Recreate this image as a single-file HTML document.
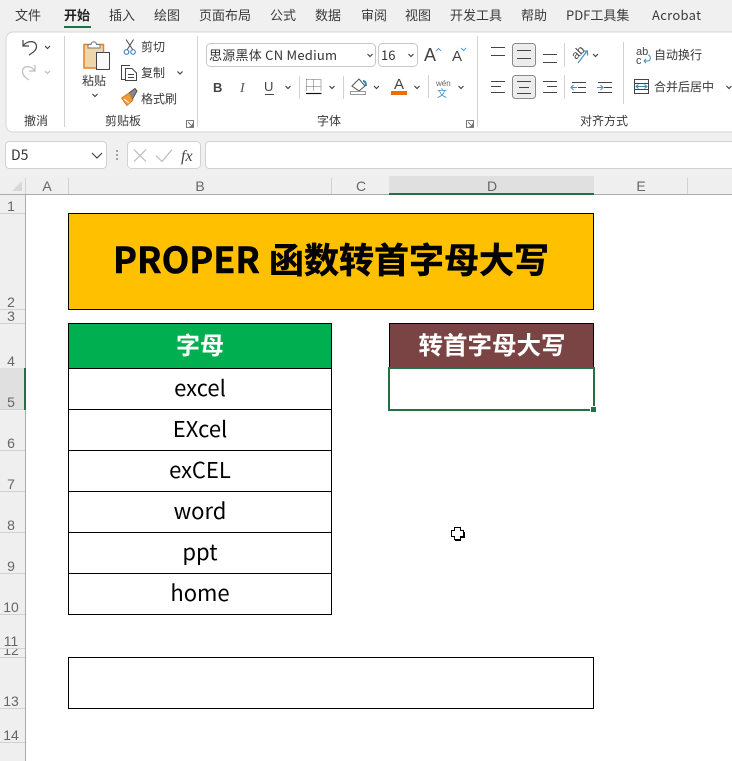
<!DOCTYPE html>
<html lang="zh"><head><meta charset="utf-8"><title>PROPER</title>
<style>
html,body{margin:0;padding:0;background:#fff;width:732px;height:761px;overflow:hidden}
svg{display:block}
text{font-family:"Noto Sans CJK SC","Liberation Sans",sans-serif;fill:#333}
.t{font-size:13px;fill:#3a3a3a}
.r{font-size:12px;fill:#3a3a3a}
.h{font-family:"Liberation Sans","Noto Sans CJK SC",sans-serif;font-size:14px;fill:#666;text-anchor:middle}
.d{font-size:22px;fill:#000;text-anchor:middle}
.c{fill:none;stroke:#444;stroke-width:1.2}
.l{stroke:#444;stroke-width:1;fill:none;shape-rendering:crispEdges}
.s{stroke:#d2d2d2;stroke-width:1;shape-rendering:crispEdges}
.b{stroke:#000;stroke-width:1;shape-rendering:crispEdges}
</style></head><body>
<svg width="732" height="761" viewBox="0 0 732 761" xmlns="http://www.w3.org/2000/svg">
<rect width="732" height="178" fill="#f0f0f0"/>
<!-- tabs -->
<text class="t" x="15" y="20">文件</text>
<text class="t" x="64" y="20" style="font-weight:700;fill:#222">开始</text>
<text class="t" x="109" y="20">插入</text>
<text class="t" x="154" y="20">绘图</text>
<text class="t" x="199" y="20">页面布局</text>
<text class="t" x="270" y="20">公式</text>
<text class="t" x="315" y="20">数据</text>
<text class="t" x="361" y="20">审阅</text>
<text class="t" x="405" y="20">视图</text>
<text class="t" x="450" y="20">开发工具</text>
<text class="t" x="521" y="20">帮助</text>
<text class="t" x="566" y="20">PDF工具集</text>
<text class="t" x="652" y="20" style="letter-spacing:.3px">Acrobat</text>
<rect x="64" y="26" width="27" height="2" fill="#1f6f4a"/>
<!-- ribbon -->
<rect x="6" y="32" width="740" height="100" rx="7" fill="#fff" stroke="#d6d6d6"/>
<path class="s" d="M64.500 36V127M197.500 36V127M477.500 36V127M299.500 76V99M343.500 76V99M428.500 75V98M564.500 43V67M564.500 75V99M623.500 42V104"/>
<!-- undo / redo -->
<path d="M23 40V46H29M23 46C27 40 37 40 36.500 47C36 51 32 53 29 55" fill="none" stroke="#444" stroke-width="1.200"/>
<path class="c" d="M45 46l2.500 2.500L50 46"/>
<path d="M35 65V71H29M35 71C31 65 22 65 22.500 72C23 76 26 78 29 80" fill="none" stroke="#bdbdbd" stroke-width="1.200"/>
<path d="M45 71l2.500 2.500L50 71" fill="none" stroke="#bdbdbd" stroke-width="1.200"/>
<text class="r" x="24" y="125">撤消</text>
<!-- paste -->
<rect x="84" y="44.500" width="19.500" height="23.500" fill="#eed5aa" stroke="#e97f22" stroke-width="1.500"/>
<path d="M88 48V44.500H91C91.500 41 96 41 96.500 44.500H100V48Z" fill="#fff" stroke="#777"/>
<rect x="96.500" y="52.500" width="13" height="17" fill="#fafafa" stroke="#444"/>
<text class="r" x="82" y="85">粘贴</text>
<path class="c" d="M92.500 94l2.500 2.500L97.500 94"/>
<!-- cut -->
<path d="M126 39.500L133 50M133.500 39.500L127 50" fill="none" stroke="#555" stroke-width="1.100"/>
<circle cx="126.500" cy="52" r="2.300" fill="none" stroke="#4a86c5" stroke-width="1.200"/>
<circle cx="133" cy="52" r="2.300" fill="none" stroke="#4a86c5" stroke-width="1.200"/>
<text class="r" x="141" y="51">剪切</text>
<!-- copy -->
<path d="M125 79.500H121.500V65.500H130" fill="none" stroke="#444"/>
<path d="M125.500 68.500H132L136.500 73V80.500H125.500Z" fill="#fff" stroke="#444"/>
<path class="l" d="M128 74.500H134M128 77.500H134"/>
<text class="r" x="141" y="77">复制</text>
<path class="c" d="M177.500 71.500l2.500 2.500L182.500 71.500"/>
<!-- painter -->
<path d="M121.500 98L129 93L133 100L127 105.500Z" fill="#f39a32" stroke="#e07a16"/>
<path d="M124 99L129 103" stroke="#fff" fill="none"/>
<path d="M129 93L135 88.500L137 91L132.500 99" fill="#888" stroke="#555"/>
<text class="r" x="141" y="103">格式刷</text>
<text class="r" x="105" y="125">剪贴板</text>
<path d="M186.500 120.500H193.500V127.500H186.500ZM188 122L192.500 126.500M192.500 123.500V126.500H189.500" fill="none" stroke="#555" stroke-width=".8"/>
<!-- font -->
<rect x="206.500" y="43.500" width="169" height="23" rx="4" fill="#fff" stroke="#c8c8c8"/>
<text x="209" y="60" style="font-size:13px;fill:#333;letter-spacing:.25px">思源黑体 CN Medium</text>
<path class="c" d="M367.500 54l2.500 2.500L372.500 54"/>
<rect x="378.500" y="43.500" width="39" height="23" rx="4" fill="#fff" stroke="#c8c8c8"/>
<text x="381" y="60" style="font-size:13px;fill:#333">16</text>
<path class="c" d="M408.500 54l2.500 2.500L413.500 54"/>
<text x="424" y="61" style="font-size:18px;fill:#444;font-family:'Liberation Sans'">A</text>
<path d="M436 51l2.500-2.500L441 51" fill="none" stroke="#5a9bd0"/>
<text x="452" y="61" style="font-size:15px;fill:#444;font-family:'Liberation Sans'">A</text>
<path d="M461 48l2.500 2.500L466 48" fill="none" stroke="#5a9bd0"/>
<text x="213" y="92" style="font-size:13px;font-weight:700;fill:#444;font-family:'Liberation Sans'">B</text>
<text x="240" y="92" style="font-size:14px;font-style:italic;fill:#555;font-family:'Liberation Serif'">I</text>
<text x="264" y="91" style="font-size:13px;fill:#444;font-family:'Liberation Sans'">U</text>
<path class="l" d="M265 94.500H274"/>
<path class="c" d="M285.500 86l2.500 2.500L290.500 86"/>
<path d="M306.500 79.500H321M306.500 86.500H321M306.500 79.500V91M321 79.500V91M313.500 79.500V91" fill="none" stroke="#666" stroke-dasharray="1 1"/>
<path d="M306 93.500H321.500" stroke="#111" stroke-width="1.200" fill="none"/>
<path class="c" d="M329.500 86l2.500 2.500L334.500 86"/>
<path d="M352 86L359 79L365 86L359 91Z" fill="#fff" stroke="#555"/>
<path d="M363 81C365 81 366 83 366 86" stroke="#3a86bb" stroke-width="2" fill="none"/>
<rect x="350.500" y="91.500" width="15" height="3" fill="#fff" stroke="#999"/>
<path class="c" d="M374 86l2.500 2.500L379 86"/>
<text x="394" y="89" style="font-size:15px;fill:#444;font-family:'Liberation Sans'">A</text>
<rect x="391" y="91" width="16" height="4" fill="#f26b00"/>
<path class="c" d="M414.500 86l2.500 2.500L419.500 86"/>
<text x="436" y="86" style="font-size:8px;fill:#666;font-family:'Liberation Sans'">wén</text>
<text x="437" y="97" style="font-size:10px;fill:#4a90c4">文</text>
<path class="c" d="M458.500 86l2.500 2.500L463.500 86"/>
<text class="r" x="317" y="125">字体</text>
<path d="M466.500 120.500H473.500V127.500H466.500ZM468 122L472.500 126.500M472.500 123.500V126.500H469.500" fill="none" stroke="#555" stroke-width=".8"/>
<!-- alignment -->
<path class="l" d="M491 47.500H505M491 55.500H505"/>
<rect x="512.500" y="43.500" width="23" height="23" rx="3" fill="#ececec" stroke="#8a8a8a"/>
<path class="l" d="M517 50.500H531M517 58.500H531"/>
<path class="l" d="M543 54.500H557M543 62.500H557"/>
<text x="0" y="0" transform="translate(576 60) rotate(-45)" style="font-size:12px;fill:#444;font-family:'Liberation Sans'">ab</text>
<path d="M578 63L587 51M583 51H587.500V55.500" fill="none" stroke="#4a90c4" stroke-width="1.200"/>
<path class="c" d="M593 54l2.500 2.500L598 54"/>
<path class="l" d="M491 81.500H505M491 86.500H501M491 92.500H505"/>
<rect x="512.500" y="75.500" width="23" height="23" rx="3" fill="#ececec" stroke="#8a8a8a"/>
<path class="l" d="M517 81.500H531M519 87.500H529M517 93.500H531"/>
<path class="l" d="M543 81.500H557M547 86.500H557M543 92.500H557"/>
<path class="l" d="M572 82.500H586M578 87.500H586M572 92.500H586"/>
<path d="M571 87.500H577M573.500 85L571 87.500L573.500 90" fill="none" stroke="#4a90c4"/>
<path class="l" d="M598 82.500H612M604 87.500H612M598 92.500H612"/>
<path d="M597 87.500H603M600.500 85L603 87.500L600.500 90" fill="none" stroke="#4a90c4"/>
<text x="636" y="55" style="font-size:11px;fill:#444;font-family:'Liberation Sans'">ab</text>
<text x="636" y="64" style="font-size:11px;fill:#444;font-family:'Liberation Sans'">c</text>
<path d="M644 61H648C651 61 651 55 648 55M644 61l2-2M644 61l2 2" fill="none" stroke="#4a90c4" stroke-width="1.100"/>
<text class="r" x="654" y="59">自动换行</text>
<rect x="634.500" y="79.500" width="14" height="14" fill="#fff" stroke="#444"/>
<path class="l" d="M634 83.500H649M634 89.500H649"/>
<path d="M636 86.500H647M638.500 84.500L636 86.500L638.500 88.500M644.500 84.500L647 86.500L644.500 88.500" fill="none" stroke="#3a86bb"/>
<text class="r" x="654" y="91">合并后居中</text>
<path class="c" d="M726.500 86l2.500 2.500L731.500 86"/>
<text class="r" x="580" y="125">对齐方式</text>
<!-- formula bar -->
<rect x="5.500" y="141.500" width="101" height="27" rx="4" fill="#fff" stroke="#d2d2d2"/>
<text x="11" y="160" style="font-size:14px;fill:#333">D5</text>
<path d="M92 153l5 5 5-5" fill="none" stroke="#444" stroke-width="1.200"/>
<path d="M117 150v2M117 154v2M117 158v2" stroke="#888" stroke-width="1.500" fill="none"/>
<rect x="127.500" y="141.500" width="73" height="27" rx="4" fill="#fff" stroke="#d2d2d2"/>
<path d="M134 149.500L146 161.500M146 149.500L134 161.500" stroke="#bbb" fill="none" stroke-width="1.200"/>
<path d="M156 155.500L162 161.500L172 149.500" stroke="#bbb" fill="none" stroke-width="1.200"/>
<text x="181" y="161" style="font-size:16px;font-style:italic;fill:#444;font-family:'Liberation Serif'">fx</text>
<rect x="205.500" y="141.500" width="540" height="27" rx="4" fill="#fff" stroke="#d2d2d2"/>
<!-- col headers -->
<rect x="0" y="176" width="732" height="19" fill="#efefef"/>
<path d="M22 181V191H12Z" fill="#d8d8d8"/>
<path class="s" d="M25.500 178V194M68.500 178V194M331.500 178V194M687.500 178V194"/>
<rect x="389" y="176" width="205" height="17" fill="#e0e0e0"/>
<rect x="0" y="194" width="732" height="1" fill="#ababab"/>
<rect x="389" y="193" width="205" height="2" fill="#217346"/>
<text class="h" x="47" y="191">A</text>
<text class="h" x="200" y="191">B</text>
<text class="h" x="361" y="191">C</text>
<text class="h" x="492" y="191">D</text>
<text class="h" x="641" y="191">E</text>
<!-- row headers -->
<rect x="0" y="195" width="25" height="566" fill="#efefef"/>
<rect x="0" y="368" width="25" height="41" fill="#e0e0e0"/>
<path class="s" d="M0 213.500H25M0 309.500H25M0 323.500H25M0 409.500H25M0 450.500H25M0 491.500H25M0 532.500H25M0 573.500H25M0 614.500H25M0 648.500H25M0 657.500H25M0 708.500H25M0 742.500H25"/>
<rect x="25" y="195" width="1" height="566" fill="#ababab"/>
<rect x="24" y="368" width="2" height="42" fill="#217346"/>
<text class="h" x="11" y="211">1</text>
<text class="h" x="11" y="307">2</text>
<text class="h" x="11" y="321">3</text>
<text class="h" x="11" y="366">4</text>
<text class="h" x="11" y="407">5</text>
<text class="h" x="11" y="448">6</text>
<text class="h" x="11" y="489">7</text>
<text class="h" x="11" y="530">8</text>
<text class="h" x="11" y="571">9</text>
<text class="h" x="11" y="612">10</text>
<text class="h" x="11" y="646">11</text>
<svg x="0" y="649" width="25" height="8" viewBox="0 649 25 8"><text class="h" x="11" y="655">12</text></svg>
<text class="h" x="11" y="706">13</text>
<text class="h" x="11" y="740">14</text>
<!-- sheet -->
<rect x="68.500" y="213.500" width="525" height="96" style="fill:#ffc000" class="b"/>
<text y="273" style="font-weight:700;fill:#000;stroke:#000;stroke-width:.5px"><tspan x="113" style="font-size:36px">PROPER</tspan><tspan x="269" style="font-size:35px">函数转首字母大写</tspan></text>
<rect x="68.500" y="323.500" width="263" height="45" style="fill:#00b050" class="b"/>
<text x="200" y="354" text-anchor="middle" style="font-size:24px;font-weight:700;fill:#fff">字母</text>
<rect x="389.500" y="323.500" width="204" height="45" style="fill:#7b4444" class="b"/>
<text x="492" y="354" text-anchor="middle" style="font-size:24.500px;font-weight:700;fill:#fff">转首字母大写</text>
<path class="b" style="fill:none" d="M68.500 368.500V614.500H331.500V368.500M68.500 409.500H331.500M68.500 450.500H331.500M68.500 491.500H331.500M68.500 532.500H331.500M68.500 573.500H331.500"/>
<text class="d" x="200" y="396">excel</text>
<text class="d" x="200" y="437">EXcel</text>
<text class="d" x="200" y="478">exCEL</text>
<text class="d" x="200" y="519">word</text>
<text class="d" x="200" y="560">ppt</text>
<text class="d" x="200" y="601">home</text>
<rect x="68.500" y="657.500" width="525" height="51" style="fill:#fff" class="b"/>
<!-- selection -->
<rect x="389" y="368" width="205" height="42" fill="#fff" stroke="#217346" stroke-width="2" shape-rendering="crispEdges"/>
<rect x="590" y="406" width="7" height="7" fill="#fff"/>
<rect x="591" y="407" width="5" height="5" fill="#217346"/>
<!-- cursor -->
<g transform="translate(-1 -1)"><path d="M455.500 528.500H461.500V531.500H464.500V537.500H461.500V540.500H455.500V537.500H452.500V531.500H455.500Z" fill="#fff" stroke="#000" shape-rendering="crispEdges"/>
<path d="M462 538.500H465.500V533M456 541.500H462" fill="none" stroke="#000" shape-rendering="crispEdges"/></g>
</svg>
</body></html>
